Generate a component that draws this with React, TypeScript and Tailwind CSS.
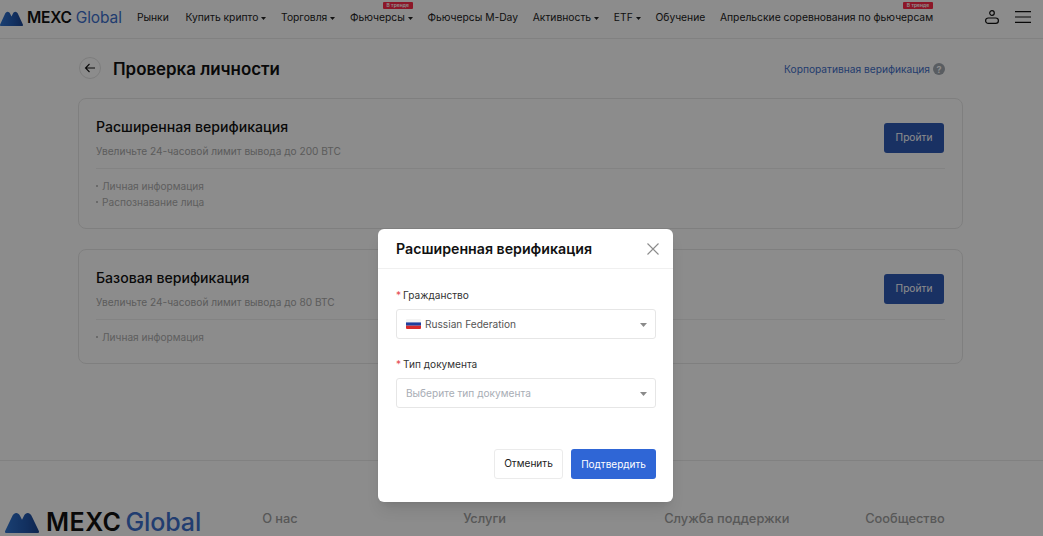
import React from "react";

const Caret = () => (
  <svg width="5" height="3" viewBox="0 0 7 4" className="ml-[3px]"><path d="M0 0h7L3.500 4z" fill="currentColor" /></svg>
);

const Mountain = ({ w, h, id }: { w: number; h: number; id: string }) => (
  <svg width={w} height={h} viewBox="0 0 34 22" preserveAspectRatio="none" className="shrink-0">
    <defs>
      <linearGradient id={id} x1="0" x2="1" y1="0" y2="0">
        <stop offset="0" stopColor="#2f74d0" />
        <stop offset="0.6" stopColor="#2259b0" />
        <stop offset="1" stopColor="#1b4490" />
      </linearGradient>
    </defs>
    <path d="M1 22C-.2 22-.3 20.500.5 19L7 5C9 0 13 0 15 4L17 8 19 4C21 0 25 0 27 5L33.500 19C34.300 20.500 34.200 22 33 22Z" fill={`url(#${id})`} />
  </svg>
);

const Logo = ({ small }: { small?: boolean }) =>
  small ? (
    <div className="mb-[2px] flex items-center font-['Inter',sans-serif] text-[15.500px] leading-none">
      <Mountain w={23} h={15} id="logo-a" />
      <span className="ml-[4px] font-semibold tracking-[-0.2px] text-[#111]">MEXC</span>
      <span className="ml-[4px] font-normal tracking-[-0.1px] text-[#3d6fcc]">Global</span>
    </div>
  ) : (
    <div className="mt-px flex shrink-0 items-center font-['Inter',sans-serif] text-[25px] leading-none">
      <Mountain w={34} h={21} id="logo-b" />
      <span className="ml-[7px] font-semibold tracking-[0.5px] text-[#111]">MEXC</span>
      <span className="ml-[4px] font-medium tracking-[-0.1px] text-[#3d6fcc]">Global</span>
    </div>
  );

const navItems: { label: string; caret?: boolean; hot?: boolean; extra?: string }[] = [
  { label: "Рынки", extra: "mr-[2px]" },
  { label: "Купить крипто", caret: true },
  { label: "Торговля", caret: true },
  { label: "Фьючерсы", caret: true, hot: true },
  { label: "Фьючерсы M-Day" },
  { label: "Активность", caret: true },
  { label: "ETF", caret: true },
  { label: "Обучение" },
  { label: "Апрельские соревнования по фьючерсам", hot: true },
];

const Card = ({ title, sub, items, height }: { title: string; sub: string; items: string[]; height: string }) => (
  <section className={`flex flex-col rounded-[8px] border border-[#e8e8e8] px-[17px] ${height}`}>
    <div className="flex justify-between border-b border-[#efefef] pb-[9px] pt-[18px]">
      <div>
        <h2 className="text-[14.100px] font-medium leading-[20px] text-[#111]">{title}</h2>
        <p className="mt-[6px] text-[10.150px] leading-[16px] text-[#a8a8a8]">{sub}</p>
      </div>
      <button className="mr-px mt-[6px] h-[30px] w-[60px] rounded-[3px] bg-[#2f5ab4] text-[10.200px] text-white">Пройти</button>
    </div>
    <ul className="pt-[9px] text-[10.150px] leading-[16px] text-[#adadad]">
      {items.map((t) => (
        <li key={t} className="flex items-center">
          <span className="mr-[4px] h-[2px] w-[2px] rounded-full bg-[#adadad]" />
          {t}
        </li>
      ))}
    </ul>
  </section>
);

const Select = ({ children, muted }: { children: React.ReactNode; muted?: boolean }) => (
  <div className={`flex h-[30px] items-center justify-between rounded-[3px] border border-[#e6e6e6] pl-[9px] pr-[8px] pt-px text-[10.150px] ${muted ? "text-[#a8adb5]" : "text-[#555]"}`}>
    <div className="flex items-center">{children}</div>
    <svg width="7" height="4" viewBox="0 0 7 4"><path d="M0 0h7L3.500 4z" fill="#8a8a8a" /></svg>
  </div>
);

export default function App() {
  return (
    <div className="relative h-[536px] w-[1043px] overflow-hidden bg-white font-['Inter','Noto_Sans',sans-serif]">
      <header className="flex h-[39px] items-center border-b border-[#ececec] pr-[12px]">
        <Logo small />
        <nav className="mb-[2px] ml-[15px] flex gap-[14.700px] text-[10.300px] text-[#222]">
          {navItems.map((n) => (
            <div key={n.label} className={`relative flex items-center whitespace-nowrap ${n.extra ?? ""}`}>
              {n.label}
              {n.caret && <Caret />}
              {n.hot && (
                <span className="absolute right-0 top-[-8px] w-[30px] rounded-[1px] bg-[#ff2a4a] text-center text-[5px] font-semibold leading-[7px] text-white">В тренде</span>
              )}
            </div>
          ))}
        </nav>
        <div className="mb-[4px] ml-auto flex items-center gap-[16px]">
          <svg width="14" height="14" viewBox="0 0 14 14" fill="none" stroke="#111" strokeWidth="1.200" className="mb-px"><circle cx="7" cy="3" r="2.300" /><rect x=".6" y="8" width="12.800" height="5.400" rx="2.700" /></svg>
          <svg width="16" height="12" viewBox="0 0 16 12" stroke="#111" strokeWidth="1.200"><path d="M0 .7h16M0 6h16M0 11.300h16" /></svg>
        </div>
      </header>

      <main className="pl-[78px] pr-[80px]">
        <div className="flex h-[59px] items-center justify-between">
          <div className="flex items-center">
            <span className="ml-px flex h-[22px] w-[22px] items-center justify-center rounded-full border border-[#e4e4e4]">
              <svg width="12" height="12" viewBox="0 0 12 12" fill="none" stroke="#111" strokeWidth="1.100"><path d="M11 6H1.500M5.500 2 1.500 6l4 4" /></svg>
            </span>
            <h1 className="ml-[12px] pt-[2px] text-[16.900px] font-semibold text-[#111]">Проверка личности</h1>
          </div>
          <div className="mr-[18px] flex items-center pt-[2px] text-[10.200px] text-[#3f6fc9]">
            Корпоративная верификация
            <span className="ml-[3px] flex h-[12px] w-[12px] items-center justify-center rounded-full bg-[#a3a9b1] text-[9px] font-bold leading-none text-white">?</span>
          </div>
        </div>
        <div className="flex flex-col gap-[20px]">
          <Card title="Расширенная верификация" sub="Увеличьте 24-часовой лимит вывода до 200 BTC" items={["Личная информация", "Распознавание лица"]} height="h-[131px]" />
          <Card title="Базовая верификация" sub="Увеличьте 24-часовой лимит вывода до 80 BTC" items={["Личная информация"]} height="h-[115px]" />
        </div>
      </main>

      <footer className="mt-[96px] border-t border-[#ececec] pl-[5px] pt-[48px]">
        <div className="flex items-start">
          <Logo />
          <div className="ml-[61px] grid w-[804px] shrink-0 grid-cols-4 text-[12.800px] font-medium text-[#a0a0a0]">
            <span>О нас</span>
            <span>Услуги</span>
            <span>Служба поддержки</span>
            <span>Сообщество</span>
          </div>
        </div>
      </footer>

      <div className="absolute inset-0 bg-black/45" />

      <div className="absolute left-[378px] top-[229px] h-[273px] w-[295px] rounded-[6px] bg-white shadow-lg">
        <div className="flex h-[40px] items-center justify-between border-b border-[#f0f0f0] pl-[18px] pr-[13px]">
          <h3 className="text-[14.200px] font-semibold text-[#111]">Расширенная верификация</h3>
          <svg width="14" height="14" viewBox="0 0 14 14" stroke="#8c8c8c" strokeWidth="1.100"><path d="M1.500 1.500l11 11M12.500 1.500l-11 11" /></svg>
        </div>
        <div className="pl-[18px] pr-[17px] pt-[19px]">
          <label className="block text-[10.100px] leading-[14px] text-[#333]"><span className="mr-[2px] text-[#e5484d]">*</span>Гражданство</label>
          <div className="mt-[7px]">
            <Select>
              <svg width="15" height="10" viewBox="0 0 15 10" className="mr-[4px] rounded-[1px]"><rect width="15" height="3.400" fill="#f3f3f3" /><rect y="3.400" width="15" height="3.300" fill="#1f3f9e" /><rect y="6.700" width="15" height="3.300" fill="#d92b2b" /></svg>
              Russian Federation
            </Select>
          </div>
          <label className="mt-[18px] block text-[10.100px] leading-[14px] text-[#333]"><span className="mr-[2px] text-[#e5484d]">*</span>Тип документа</label>
          <div className="mt-[7px]">
            <Select muted>Выберите тип документа</Select>
          </div>
          <div className="mt-[41px] flex justify-end gap-[8px]">
            <button className="h-[30px] w-[69px] rounded-[3px] border border-[#ebebeb] text-[10.100px] text-[#222]">Отменить</button>
            <button className="h-[30px] w-[85px] rounded-[3px] bg-[#2f66d6] text-[10px] text-white">Подтвердить</button>
          </div>
        </div>
      </div>
    </div>
  );
}
